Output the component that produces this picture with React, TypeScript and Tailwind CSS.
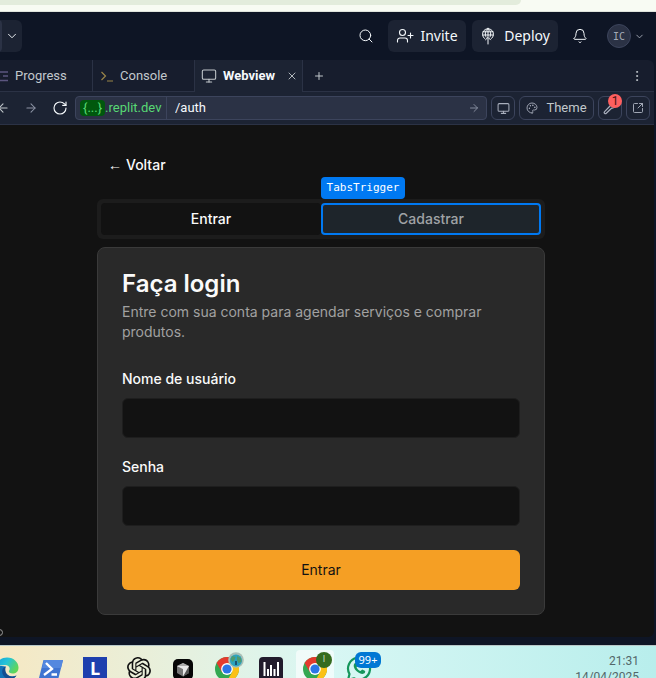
import type { ReactNode } from "react";
import {
  ArrowLeft,
  ArrowRight,
  Bell,
  ChevronDown,
  EllipsisVertical,
  Monitor,
  Palette,
  Plus,
  RotateCw,
  Search,
  SquareArrowOutUpRight,
  X,
} from "lucide-react";
import { SiOpenai } from "react-icons/si";

function InviteIcon() {
  return (
    <svg width="18" height="16" viewBox="0 0 18 16" fill="none" stroke="currentColor" strokeWidth="1.1" strokeLinecap="round" aria-hidden="true">
      <circle cx="6.500" cy="4.500" r="3" />
      <path d="M1.500 14v-1.500a2.500 2.500 0 0 1 2.500-2.500h5a2.500 2.500 0 0 1 2.500 2.500V14M14.500 5v5M12 7.500h5" />
    </svg>
  );
}

function DeployIcon() {
  return (
    <svg width="16" height="18" viewBox="0 0 16 18" fill="none" stroke="currentColor" strokeLinecap="round" strokeLinejoin="round" aria-hidden="true">
      <path d="M4.500 11.500A5.500 5.500 0 1 1 11.500 11.500M3 4.800h10M2.700 8h10.600M8 1.500v8M8 1.500C4.800 3.500 4.800 8 6 10M8 1.500C11.200 3.500 11.200 8 10 10M8 17v-6M5.500 12.800L8 10.300l2.500 2.500" />
    </svg>
  );
}

function ProgressIcon() {
  return (
    <svg width="14" height="14" viewBox="0 0 14 14" fill="none" stroke="#5b557f" strokeWidth="1.500" aria-hidden="true">
      <path d="M1 3h12M8 7h5M1 11.500h12M1 5l3 2-3 2" />
    </svg>
  );
}

function PromptIcon() {
  return (
    <svg width="14" height="14" viewBox="0 0 14 14" fill="none" stroke="#9a8549" strokeWidth="1.200" aria-hidden="true">
      <path d="M1.500 3l4 4-4 4M7 12h6" />
    </svg>
  );
}

function ToolsIcon() {
  return (
    <svg width="14" height="14" viewBox="0 0 14 14" fill="none" stroke="currentColor" strokeWidth="1.200" strokeLinejoin="round" aria-hidden="true">
      <path d="M7.500 4.500A3.200 3.200 0 0 1 11.500 1.500L9.800 3.500l.8 1 2-.5A3.200 3.200 0 0 1 8.800 7L3.300 12.300a1.200 1.200 0 0 1-1.700-1.700z" />
    </svg>
  );
}

function EdgeIcon() {
  return (
    <svg width="24" height="24" viewBox="0 0 24 24" aria-hidden="true">
      <defs>
        <linearGradient id="edge-top" x1="0" y1="0" x2="1" y2="0.500">
          <stop offset="0" stopColor="#189fd8" />
          <stop offset="0.500" stopColor="#25c3d8" />
          <stop offset="1" stopColor="#5fd65a" />
        </linearGradient>
      </defs>
      <path d="M.5 11.500a11.500 11.500 0 0 0 21 7c-2 1-4.500 1.500-7 .5-3-1.200-5-4-4.500-7 .3-1.500 1-2.200 1-2.200C7 8 2 9 .5 11.500z" fill="#1272b8" />
      <path d="M.5 11.500C1 5 6 .5 12 .5c7 0 11.500 5 11.500 10 0 4-2.500 6-6 6-3 0-4-1.200-3.500-2.500 2-3-.5-6-4-6-4.500 0-8 1-9.500 3.500z" fill="url(#edge-top)" />
      <path d="M10.500 9.500c-4.500 1.500-5 9 2 12.500 3 .8 7-.5 9-3.500-3 1.500-8 1.500-10-2-1.500-2.500-1.300-5-1-7z" fill="#134d91" />
    </svg>
  );
}

function PowerShellIcon() {
  return (
    <svg width="24" height="24" viewBox="0 0 24 24" aria-hidden="true">
      <path d="M4.500 3H24l-4.500 18H0z" fill="#3f74d1" />
      <path d="M5 3h19l-2 8H3z" fill="#5488df" />
      <path d="M7 6l6 6-8 6M12.500 17.500H18" fill="none" stroke="#fff" strokeWidth="2.300" />
    </svg>
  );
}

function CubeIcon() {
  return (
    <svg width="22" height="24" viewBox="0 0 22 24" aria-hidden="true">
      <rect x="1" y="2" width="20" height="21" rx="5" fill="#060606" />
      <path d="M5 9l6-3 6 3v7l-6 3.500L5 16z" fill="#777" />
      <path d="M5 9l6-3 6 3-6 3z" fill="#aaa" />
      <path d="M17 9v7l-6 3.500V12z" fill="#555" />
      <path d="M5 9h12l-6 10.500V12z" fill="#e8e8e8" />
    </svg>
  );
}

function ChromeIcon() {
  return (
    <svg width="24" height="24" viewBox="0 0 24 24" aria-hidden="true">
      <circle cx="12" cy="12" r="12" fill="#33a852" />
      <path d="M12 6h10.400A12 12 0 0 1 12 24l5.200-9z" fill="#fbc116" />
      <path d="M1.600 6l5.200 9L12 6h10.400A12 12 0 0 0 1.600 6z" fill="#e33b2e" />
      <circle cx="12" cy="12" r="5.900" fill="#fff" />
      <circle cx="12" cy="12" r="4.600" fill="#2b75e6" />
    </svg>
  );
}

function GlobeBadge() {
  return (
    <svg width="16" height="16" viewBox="0 0 16 16" aria-hidden="true">
      <circle cx="8" cy="8" r="7.800" fill="#a9bfb6" />
      <circle cx="8" cy="8.500" r="6" fill="#2da3bd" />
      <path d="M2.500 7l2-3 3 1-1 3-2 2zM9 4l4 2 .5 4-3 1-1.500-3z" fill="#4f9a6e" />
      <path d="M7 9h2v4H7z" fill="#1c5472" />
    </svg>
  );
}

function BarsIcon() {
  return (
    <svg width="24" height="24" viewBox="0 0 24 24" aria-hidden="true">
      <rect width="24" height="24" rx="4" fill="#211b2c" />
      <path d="M5.500 5v14M9 12v7M12 8v11M15.500 12v7M19 5v14" stroke="#fff" strokeWidth="2" />
    </svg>
  );
}

function WhatsAppIcon() {
  return (
    <svg width="26" height="26" viewBox="0 0 26 26" aria-hidden="true">
      <path d="M2 24l1.500-6A11 11 0 1 1 8 22.300z" fill="none" stroke="#15965b" strokeWidth="2.200" strokeLinejoin="round" />
      <path d="M9 7c-2.500 2-1 6 2 8.500s6.500 3.500 8 1l.2-1.500-3-1.500-1.700 1.500c-1.800-.5-3.500-2.300-4-4L12 9.500 10.700 7z" fill="#15965b" />
    </svg>
  );
}

function TaskButton({ label, active, children }: { label: string; active?: boolean; children: ReactNode }) {
  return (
    <button
      aria-label={label}
      className={
        active
          ? "relative flex size-[38px] shrink-0 items-center justify-center rounded bg-white/60"
          : "relative flex size-[38px] shrink-0 items-center justify-center rounded"
      }
    >
      {children}
    </button>
  );
}

function ToolButton({ label, children }: { label: string; children: ReactNode }) {
  return (
    <button
      aria-label={label}
      className="relative flex size-6 shrink-0 items-center justify-center rounded-md border border-[#3c445c] text-[#a9afbd]"
    >
      {children}
    </button>
  );
}

function Header() {
  return (
    <header className="flex h-12 items-center justify-end bg-[#0e1525] pr-[11px] font-['Noto_Sans',sans-serif] text-[#f5f9fc]">
      <div className="mr-auto flex h-8 w-[34px] overflow-hidden rounded-md bg-[#1c2333]">
        <span className="w-[14px] rounded-r-sm bg-[#2b3245]" />
        <button aria-label="Run options" className="flex flex-1 items-center justify-center">
          <ChevronDown size={14} strokeWidth={1.6} />
        </button>
      </div>
      <button aria-label="Search" className="mr-[14px] flex size-4 items-center justify-center">
        <Search size={16} strokeWidth={1.5} />
      </button>
      <button className="mr-1.5 flex h-8 w-[78px] items-center justify-center gap-1.5 rounded-md bg-[#1c2333] text-sm">
        <InviteIcon />
        Invite
      </button>
      <button className="mr-[14px] flex h-8 w-[86px] items-center justify-center gap-2 rounded-md bg-[#1c2333] text-sm">
        <DeployIcon />
        Deploy
      </button>
      <button aria-label="Notifications" className="mr-[19px] flex size-4 items-center justify-center">
        <Bell size={16} strokeWidth={1.5} />
      </button>
      <button aria-label="Account" className="flex items-center gap-[3px] text-[#a3a9b6]">
        <span className="flex size-6 items-center justify-center rounded-full border border-[#3c445c] bg-[#2b3245] font-['DejaVu_Sans_Mono',monospace] text-[10px]">
          IC
        </span>
        <ChevronDown size={11} strokeWidth={2} />
      </button>
    </header>
  );
}

function PaneTabs() {
  const tab = "flex items-center border-r border-b border-[#2b3245]";
  return (
    <div role="tablist" className="flex h-8 bg-[#171d2d] font-[Roboto,sans-serif] text-[13px] text-[#c2c8cc]">
      <button role="tab" aria-selected="false" className={`${tab} w-[105px] gap-1.5 pl-[7px]`}>
        <ProgressIcon />
        Progress
      </button>
      <button role="tab" aria-selected="false" className={`${tab} w-[102px] gap-1.5 pl-[7px]`}>
        <PromptIcon />
        Console
      </button>
      <div className="flex w-[108px] items-center border-r border-[#2b3245] bg-[#1c2333] pl-1.5">
        <button role="tab" aria-selected="true" className="flex items-center gap-1.5 font-bold text-[#f5f9fc]">
          <Monitor size={16} strokeWidth={1.6} className="text-[#c2c8cc]" />
          Webview
        </button>
        <button aria-label="Close tab" className="mr-1 ml-auto">
          <X size={12} strokeWidth={1.8} />
        </button>
      </div>
      <div className="flex flex-1 items-center justify-between border-b border-[#2b3245] px-2.5">
        <button aria-label="New tab">
          <Plus size={12} strokeWidth={2} />
        </button>
        <button aria-label="Pane menu">
          <EllipsisVertical size={14} strokeWidth={1.6} />
        </button>
      </div>
    </div>
  );
}

function AddressBar() {
  return (
    <div className="flex h-[33px] items-center gap-1 border-b border-[#2b3245] bg-[#1c2333] pr-1 font-[Roboto,sans-serif] text-[13px]">
      <div className="flex w-[83px] shrink-0 items-center gap-3.5 pl-2 text-[#c2c8cc]">
        <button aria-label="Back">
          <ArrowLeft size={14} strokeWidth={1.8} />
        </button>
        <button aria-label="Forward" className="text-[#8d94a5]">
          <ArrowRight size={14} strokeWidth={1.8} />
        </button>
        <button aria-label="Reload" className="text-[#f5f9fc]">
          <RotateCw size={16} strokeWidth={1.7} />
        </button>
      </div>
      <div className="flex h-6 min-w-0 flex-1 items-center overflow-hidden rounded border border-[#3c445c] bg-[#2b3245]">
        <div className="flex h-full w-[91px] shrink-0 items-center border-r border-[#3c445c] pl-1 whitespace-nowrap text-[#58d874]">
          <span className="rounded bg-[#00580d] px-[3px] leading-4">{"{...}"}</span>
          .replit.dev
        </div>
        <input aria-label="Path" defaultValue="/auth" className="min-w-0 flex-1 bg-transparent pl-2 text-[#f5f9fc] outline-none" />
        <button aria-label="Go" className="mr-1.5 text-[#8d94a5]">
          <ArrowRight size={12} strokeWidth={1.8} />
        </button>
      </div>
      <ToolButton label="Device size">
        <Monitor size={13} strokeWidth={1.9} />
      </ToolButton>
      <button className="flex h-6 w-[75px] shrink-0 items-center justify-center gap-2 rounded-md border border-[#3c445c] text-[#c2c8cc]">
        <Palette size={12} strokeWidth={1.8} className="text-[#a9afbd]" />
        Theme
      </button>
      <ToolButton label="Developer tools">
        <ToolsIcon />
        <span className="absolute -top-[3px] -right-px flex size-[14px] items-center justify-center rounded-full bg-[#ff5f5f] text-xs text-[#471111]">
          1
        </span>
      </ToolButton>
      <ToolButton label="Open in new tab">
        <SquareArrowOutUpRight size={12} strokeWidth={1.9} />
      </ToolButton>
    </div>
  );
}

function Field({ id, label, type }: { id: string; label: string; type: string }) {
  return (
    <div className="flex flex-col gap-1.5">
      <label htmlFor={id} className="text-sm leading-[26px] font-medium">
        {label}
      </label>
      <input id={id} type={type} className="h-10 w-full rounded-md border border-[#1e1e1e] bg-[#121212] px-3 text-sm outline-none" />
    </div>
  );
}

function LoginPage() {
  return (
    <div className="mx-auto w-full max-w-md pt-[22px] font-[Inter,sans-serif] text-[#fafafa]">
      <button className="mb-4 flex h-9 items-center gap-1 px-[11px] text-sm font-medium">
        <span className="font-['Liberation_Sans',sans-serif] font-normal">←</span>
        Voltar
      </button>
      <div role="tablist" className="mb-2 grid h-10 grid-cols-2 rounded-md bg-[#1c1c1c] p-1 text-sm font-medium">
        <button role="tab" aria-selected="true" className="rounded-sm bg-[#121212]">
          Entrar
        </button>
        <button role="tab" aria-selected="false" className="relative rounded-sm border-2 border-[#0079f2] bg-[#1e252b] text-[#a0a3a6]">
          Cadastrar
          <span className="absolute -top-7 -left-0.5 flex h-[22px] w-[84px] items-center justify-center rounded bg-[#0079f2] font-['DejaVu_Sans_Mono',monospace] text-[11px] font-normal text-white">
            TabsTrigger
          </span>
        </button>
      </div>
      <section className="rounded-lg border border-[#3a3a3a] bg-[#292929] p-6">
        <h1 className="mb-1.5 text-2xl leading-6 font-semibold">Faça login</h1>
        <p className="mb-6 text-sm leading-5 text-[#a1a1a1]">Entre com sua conta para agendar serviços e comprar produtos.</p>
        <form className="flex flex-col gap-4" onSubmit={(e) => e.preventDefault()}>
          <Field id="username" label="Nome de usuário" type="text" />
          <Field id="password" label="Senha" type="password" />
          <button type="submit" className="mt-2 h-10 rounded-md bg-[#f59f24] text-sm text-[#121212]">
            Entrar
          </button>
        </form>
      </section>
    </div>
  );
}

function Taskbar() {
  return (
    <footer className="flex h-[33px] shrink-0 items-start justify-between overflow-hidden border-t border-[#b8c8c8] bg-linear-to-r from-[#f6e8c3] via-[#d8f7f4] to-[#b8eeec] pt-1 pr-[17px]">
      <nav aria-label="Taskbar" className="-ml-3 flex gap-1.5">
        <TaskButton label="Edge"><EdgeIcon /></TaskButton>
        <TaskButton label="PowerShell"><PowerShellIcon /></TaskButton>
        <TaskButton label="L">
          <span className="flex size-6 items-start justify-center bg-[#1e3fae] pt-0.5 font-['Open_Sans',sans-serif] text-lg leading-none font-bold text-white">L</span>
        </TaskButton>
        <TaskButton label="ChatGPT"><SiOpenai size={24} color="#111" /></TaskButton>
        <TaskButton label="Cursor"><CubeIcon /></TaskButton>
        <TaskButton label="Chrome">
          <ChromeIcon />
          <span className="absolute top-0.5 right-0.5"><GlobeBadge /></span>
        </TaskButton>
        <TaskButton label="Mixer"><BarsIcon /></TaskButton>
        <TaskButton label="Chrome, second profile" active>
          <ChromeIcon />
          <span className="absolute top-0.5 right-0.5 flex size-4 items-center justify-center rounded-full bg-[#356b1f] font-[Roboto,sans-serif] text-[9px] text-[#c6d6bd]">I</span>
        </TaskButton>
        <TaskButton label="WhatsApp">
          <WhatsAppIcon />
          <span className="absolute top-0.5 left-[15px] flex h-4 w-[26px] items-center justify-center rounded-md bg-[#0078d4] font-['Noto_Sans',sans-serif] text-[11px] text-white">99+</span>
        </TaskButton>
      </nav>
      <div className="pt-[3px] text-right font-[Roboto,sans-serif] text-xs leading-4 text-[#536668]">
        <div>21:31</div>
        <div>14/04/2025</div>
      </div>
    </footer>
  );
}

export default function App() {
  return (
    <div className="flex h-screen flex-col overflow-hidden bg-[#0e1525]">
      <div className="h-3 shrink-0 border-b border-[#dfe3dc] bg-[#f8fbf3] pr-[135px]">
        <div className="h-[5px] rounded-br-lg bg-[#e3ecdc]" />
      </div>
      <div className="-ml-3 flex flex-1 flex-col">
        <Header />
        <main className="mr-0.5 mb-2 flex flex-1 flex-col overflow-hidden rounded-t-md rounded-br-md">
          <PaneTabs />
          <AddressBar />
          <div className="flex flex-1 flex-col bg-[#121212]">
            <LoginPage />
            <svg className="mt-auto mb-px ml-2" width="7" height="7" viewBox="0 0 7 7" fill="none" stroke="#9a9a9a" aria-hidden="true">
              <circle cx="3.500" cy="3.500" r="3" />
            </svg>
          </div>
        </main>
      </div>
      <Taskbar />
    </div>
  );
}
